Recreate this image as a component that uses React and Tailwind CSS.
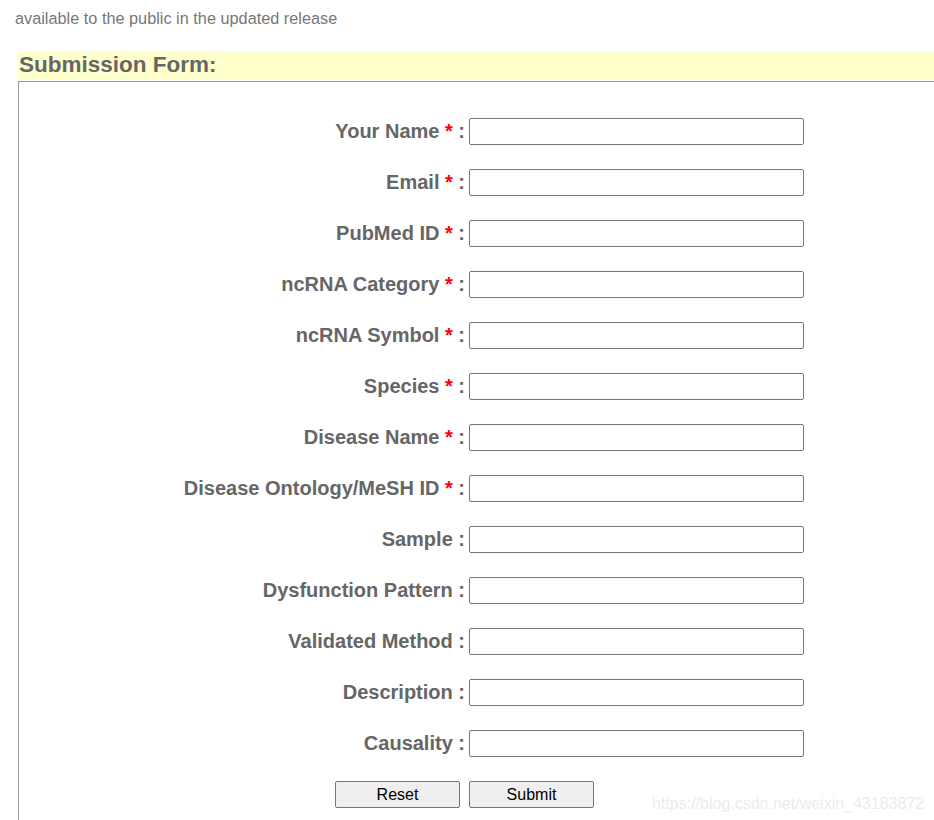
import React from "react";

const fields = [
  ["Your Name", true],
  ["Email", true],
  ["PubMed ID", true],
  ["ncRNA Category", true],
  ["ncRNA Symbol", true],
  ["Species", true],
  ["Disease Name", true],
  ["Disease Ontology/MeSH ID", true],
  ["Sample", false],
  ["Dysfunction Pattern", false],
  ["Validated Method", false],
  ["Description", false],
  ["Causality", false],
];

export default function App() {
  return (
    <div
      className="relative w-[934px] h-[820px] overflow-hidden bg-white"
      style={{ fontFamily: '"Liberation Sans", Arial, sans-serif' }}
    >
      <div className="pl-[15px] pt-[9px] text-[16.3px] leading-[18px] text-[#777]">
        available to the public in the updated release
      </div>
      <div className="ml-[18px] mt-[24px] h-[29px] bg-[#ffffcc] pl-[1px] text-[22.5px] font-bold leading-[27px] text-[#666]">
        Submission Form:
      </div>
      <div className="ml-[18px] mt-[1px] h-[800px] border-l border-t border-[#999] pt-[36px]">
        <div className="flex flex-col gap-[24px]">
          {fields.map(([label, req]) => (
            <div key={label} className="flex h-[27px] items-center">
              <div className="w-[446px] text-right text-[20px] font-bold leading-[27px] text-[#666] whitespace-nowrap">
                {label}
                {req && <span className="text-[#ff0000]"> *</span>} :
              </div>
              <input
                type="text"
                className="ml-[4px] h-[27px] w-[335px] rounded-[2px] border border-[#767676] bg-white"
              />
            </div>
          ))}
        </div>
        <div className="mt-[24px] flex gap-[9px] pl-[316px]">
          <button className="h-[27px] w-[125px] rounded-[2px] border border-[#767676] bg-[#efefef] text-[16px] text-black">
            Reset
          </button>
          <button className="h-[27px] w-[125px] rounded-[2px] border border-[#767676] bg-[#efefef] text-[16px] text-black">
            Submit
          </button>
        </div>
      </div>
      <div className="absolute left-[652px] top-[792px] text-[16px] text-[#ececec] pointer-events-none">
        https://blog.csdn.net/weixin_43183872
      </div>
    </div>
  );
}
